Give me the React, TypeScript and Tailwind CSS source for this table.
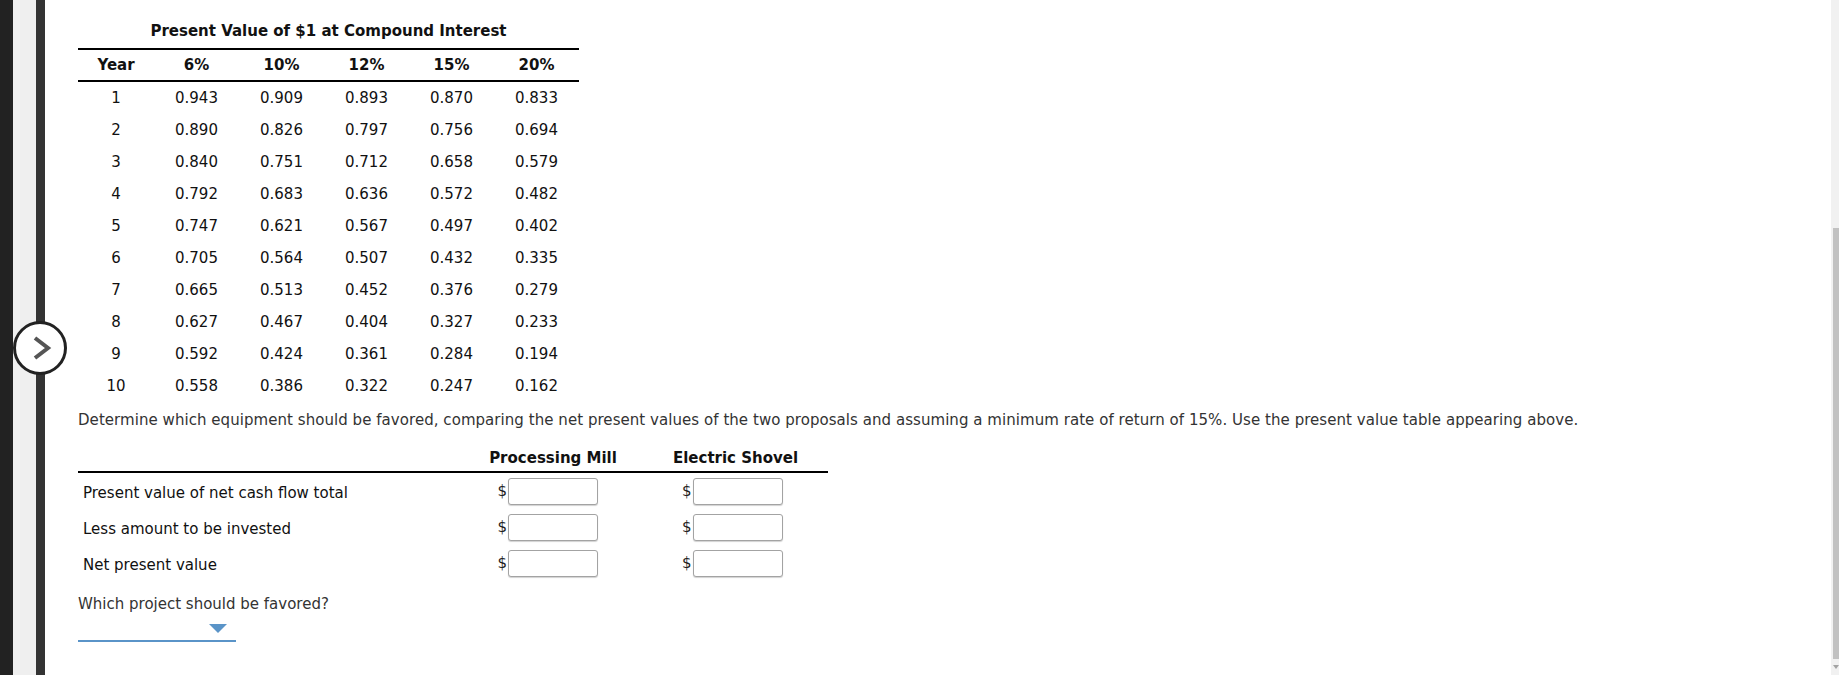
const rates = ['6%', '10%', '12%', '15%', '20%'];

const pvTable: string[][] = [
  ['0.943', '0.909', '0.893', '0.870', '0.833'],
  ['0.890', '0.826', '0.797', '0.756', '0.694'],
  ['0.840', '0.751', '0.712', '0.658', '0.579'],
  ['0.792', '0.683', '0.636', '0.572', '0.482'],
  ['0.747', '0.621', '0.567', '0.497', '0.402'],
  ['0.705', '0.564', '0.507', '0.432', '0.335'],
  ['0.665', '0.513', '0.452', '0.376', '0.279'],
  ['0.627', '0.467', '0.404', '0.327', '0.233'],
  ['0.592', '0.424', '0.361', '0.284', '0.194'],
  ['0.558', '0.386', '0.322', '0.247', '0.162'],
];

const npvRows = ['Present value of net cash flow total', 'Less amount to be invested', 'Net present value'];

function MoneyInput() {
  return (
    <div className="relative h-[27px] w-[90px]">
      <span className="absolute right-full top-1/2 -translate-y-1/2 pr-px leading-[18px] text-[#222]">$</span>
      <div className="h-full w-full rounded-[3px] border border-[#a3a3a3] bg-white shadow-[0_1px_1px_rgba(0,0,0,0.18)]" />
    </div>
  );
}

function SideRail() {
  return (
    <div className="relative flex h-full w-[45px] shrink-0">
      <div className="h-full w-[13px] bg-[#222222]" />
      <div className="h-full w-[23px] bg-[#efefef]" />
      <div className="h-full w-[9px] bg-[#333333]" />
      {/* expand button */}
      <button className="absolute left-[13px] top-[321px] flex h-[54px] w-[54px] items-center justify-center rounded-full border-[3px] border-[#222] bg-white">
        <svg width="20" height="24" viewBox="0 0 20 24" className="ml-[3px]">
          <path d="M3 2 L16 12 L3 22" fill="none" stroke="#555" strokeWidth="4" strokeLinejoin="miter" />
        </svg>
      </button>
    </div>
  );
}

export default function App() {
  return (
    <div
      className="flex h-[675px] w-full overflow-hidden bg-white text-[15px] text-[#111]"
      style={{ fontFamily: '"DejaVu Sans", Verdana, sans-serif' }}
    >
      <SideRail />

      <main className="flex-1 pl-[33px] pt-[22px]">
        {/* Present value table */}
        <div className="w-[501px]">
          <h3 className="text-center font-bold leading-[18px]">Present Value of $1 at Compound Interest</h3>
          <div className="mt-[8px] border-y-2 border-black">
            <div className="grid h-[30px] grid-cols-[76px_repeat(5,85px)] items-center text-center font-bold">
              <span>Year</span>
              {rates.map((r) => (
                <span key={r}>{r}</span>
              ))}
            </div>
          </div>
          {pvTable.map((row, i) => (
            <div key={i} className="grid h-[32px] grid-cols-[76px_repeat(5,85px)] items-center text-center">
              <span>{i + 1}</span>
              {row.map((v, j) => (
                <span key={j}>{v}</span>
              ))}
            </div>
          ))}
        </div>

        <p className="mt-[9px] leading-[18px] tracking-[0.05px] text-[#333]">
          Determine which equipment should be favored, comparing the net present values of the two proposals and assuming a minimum rate of return of 15%. Use the present value table appearing above.
        </p>

        {/* NPV entry table */}
        <div className="w-[750px]">
          <div className="grid h-[44px] grid-cols-[385px_180px_185px] items-end border-b-2 border-black pb-[4px] text-center font-bold leading-[18px]">
            <span />
            <span>Processing Mill</span>
            <span>Electric Shovel</span>
          </div>
          {npvRows.map((label) => (
            <div key={label} className="grid h-[36px] grid-cols-[385px_180px_185px] items-center">
              <span className="pl-[5px] pt-[4px]">{label}</span>
              <div className="flex justify-center">
                <MoneyInput />
              </div>
              <div className="flex justify-center pl-[4px]">
                <MoneyInput />
              </div>
            </div>
          ))}
        </div>

        <p className="mt-[14px] leading-[18px] text-[#333]">Which project should be favored?</p>
        <div className="mt-[2px] flex h-[27px] w-[158px] items-end justify-end border-b-2 border-[#5a94c8] pb-[7px] pr-[9px]">
          <svg width="18" height="9" viewBox="0 0 18 9">
            <path d="M0 0 H18 L9 9 Z" fill="#5a94c8" />
          </svg>
        </div>
      </main>

      {/* scrollbar */}
      <div className="relative h-full w-[8px] shrink-0 bg-[#f1f1f1]">
        <div className="absolute left-[2px] right-0 top-[228px] h-[431px] bg-[#c1c1c1]" />
        <svg width="6" height="4" viewBox="0 0 6 4" className="absolute bottom-[6px] left-[2px]">
          <path d="M0 0 H6 L3 4 Z" fill="#a3a3a3" />
        </svg>
      </div>
    </div>
  );
}
